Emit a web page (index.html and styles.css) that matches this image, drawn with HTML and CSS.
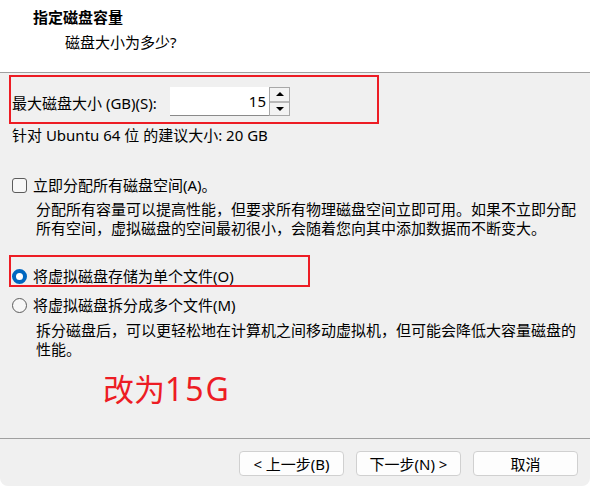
FILE: index.html
```html
<!DOCTYPE html>
<html lang="zh-CN">
<head>
<meta charset="utf-8">
<title>指定磁盘容量</title>
<link rel="stylesheet" href="styles.css">
</head>
<body>
<div class="window">
  <header class="header">
    <div class="title">指定磁盘容量</div>
    <div class="subtitle">磁盘大小为多少?</div>
  </header>
  <main class="content">
    <div class="mark size-box">
      <label class="size-label">最大磁盘大小 (GB)(S):</label>
      <div class="spin">
        <div class="spin-input">15</div>
        <div class="spin-buttons">
          <div class="spin-btn up"><span class="tri-up"></span></div>
          <div class="spin-btn down"><span class="tri-down"></span></div>
        </div>
      </div>
    </div>
    <div class="hint">针对 Ubuntu 64 位 的建议大小: 20 GB</div>

    <div class="option check-row">
      <span class="checkbox"></span>
      <span>立即分配所有磁盘空间(A)。</span>
    </div>
    <p class="desc">分配所有容量可以提高性能，但要求所有物理磁盘空间立即可用。如果不立即分配<br>所有空间，虚拟磁盘的空间最初很小，会随着您向其中添加数据而不断变大。</p>

    <div class="mark radio-box">
      <div class="option">
        <span class="radio checked"></span>
        <span>将虚拟磁盘存储为单个文件(O)</span>
      </div>
    </div>
    <div class="option radio-row2">
      <span class="radio"></span>
      <span>将虚拟磁盘拆分成多个文件(M)</span>
    </div>
    <p class="desc desc2">拆分磁盘后，可以更轻松地在计算机之间移动虚拟机，但可能会降低大容量磁盘的<br>性能。</p>

    <div class="note">改为<span class="note-num">15G</span></div>
  </main>
  <footer class="footer">
    <button class="btn">&lt; 上一步(B)</button>
    <button class="btn">下一步(N) &gt;</button>
    <button class="btn">取消</button>
  </footer>
</div>
</body>
</html>
```

FILE: styles.css
```css
* { box-sizing: border-box; }

html, body {
  margin: 0;
  padding: 0;
  background: #ffffff;
}

body {
  font-family: "Noto Sans", "Noto Sans CJK SC", sans-serif;
  font-size: 15px;
  line-height: 18px;
  color: #000;
}

.window {
  width: 590px;
  height: 486px;
  background: #f0f0f0;
  border-radius: 0 0 8px 8px;
  display: flex;
  flex-direction: column;
  overflow: hidden;
}

.header {
  background: #ffffff;
  height: 73px;
  border-bottom: 1px solid #a0a0a0;
  padding-top: 8px;
}

.title {
  font-weight: bold;
  padding-left: 33px;
}

.subtitle {
  padding-left: 65px;
  margin-top: 7px;
}

.content {
  flex: 1;
  position: relative;
}

.mark {
  border: 2px solid #ed1c24;
}

.size-box {
  margin: 2px 0 0 9px;
  width: 370px;
  height: 49px;
  display: flex;
  align-items: flex-start;
  padding: 10px 0 0 1px;
}

.size-label {
  margin-top: 7px;
  width: 158px;
  white-space: nowrap;
}

.spin {
  display: flex;
}

.spin-input {
  width: 99px;
  height: 29px;
  background: #ffffff;
  border-bottom: 1px solid #8a8a8a;
  text-align: right;
  padding: 5px 3px 0 0;
}

.spin-buttons {
  width: 21px;
  height: 29px;
  border: 1px solid #a8a8a8;
  display: flex;
  flex-direction: column;
  background: #e9e9e9;
}

.spin-btn {
  flex: 1;
  display: flex;
  align-items: center;
  justify-content: center;
  background: #f3f3f3;
}

.spin-btn.up {
  border-bottom: 2px solid #b8b8b8;
}

.tri-up {
  width: 0;
  height: 0;
  border-left: 4px solid transparent;
  border-right: 4px solid transparent;
  border-bottom: 4px solid #000;
}

.tri-down {
  width: 0;
  height: 0;
  border-left: 4px solid transparent;
  border-right: 4px solid transparent;
  border-top: 4px solid #000;
}

.hint {
  margin: 2px 0 0 12px;
}

.option {
  display: flex;
  align-items: center;
  gap: 6px;
  padding-left: 12px;
}

.check-row {
  margin-top: 32px;
}

.checkbox {
  width: 15px;
  height: 15px;
  border: 1px solid #5c5c5c;
  border-radius: 3px;
  background: #f7f7f7;
  flex: none;
}

.desc {
  margin: 6px 0 0 36px;
  line-height: 19px;
}

.desc2 {
  margin-top: 7px;
}

.radio-box {
  margin: 17px 0 0 9px;
  width: 301px;
  height: 32px;
  padding-top: 10px;
}

.radio-box .option {
  padding-left: 1px;
}

.radio {
  width: 15px;
  height: 15px;
  border-radius: 50%;
  border: 1px solid #5c5c5c;
  background: #f7f7f7;
  flex: none;
}

.radio.checked {
  border: 4.5px solid #0067c0;
  background: #ffffff;
}

.radio-row2 {
  margin-top: 9px;
}

.note {
  margin: 9px 0 0 103px;
  font-family: "Noto Sans CJK SC", "Noto Sans", sans-serif;
  font-size: 31px;
  line-height: 40px;
  color: #ed1c24;
}

.note-num {
  font-family: "Noto Sans", "Noto Sans CJK SC", sans-serif;
  font-size: 32px;
  letter-spacing: 2px;
}

.footer {
  height: 48px;
  border-top: 1px solid #a0a0a0;
  display: flex;
  justify-content: flex-end;
  gap: 12px;
  padding: 12px 12px 0 0;
}

.btn {
  width: 105px;
  height: 25px;
  background: #fdfdfd;
  border: 1px solid #d0d0d0;
  border-radius: 4px;
  font-family: "Noto Sans", "Noto Sans CJK SC", sans-serif;
  font-size: 15px;
  line-height: 18px;
  color: #000;
  padding: 0;
}
```
